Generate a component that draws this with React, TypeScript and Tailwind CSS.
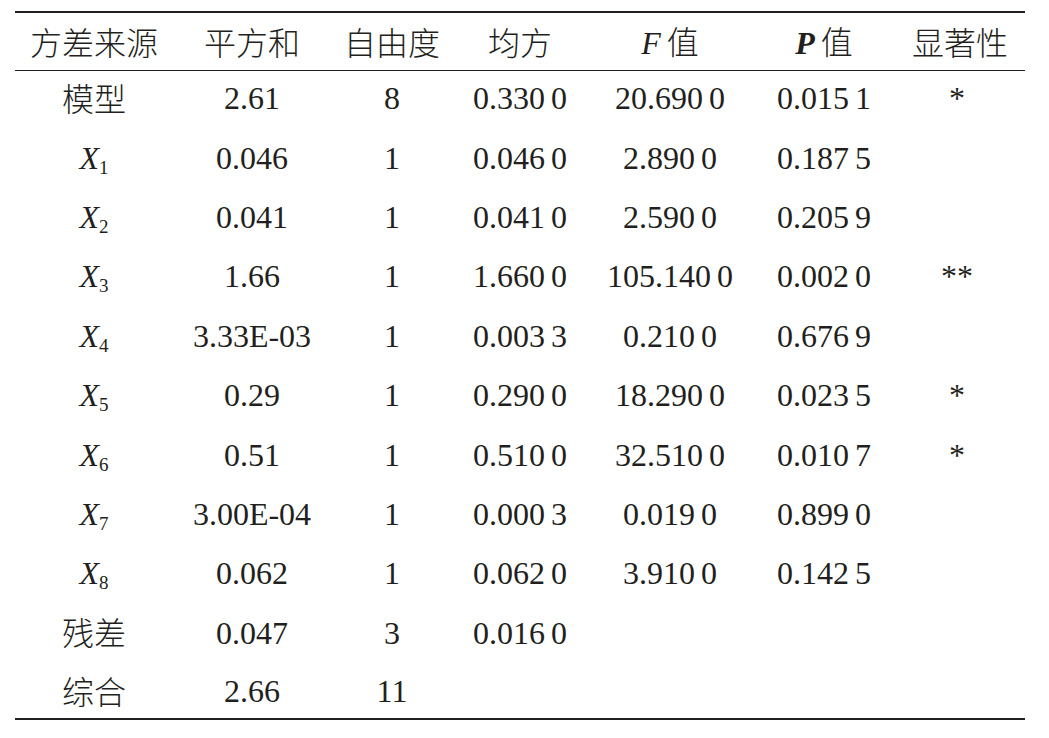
import React from "react";

type Row = { label: React.ReactNode; cells: string[] };

const X = ({ n }: { n: number }) => (
  <span className="inline-flex items-baseline font-['Liberation_Serif']">
    <span className="italic">X</span>
    <span className="text-[19px] relative top-[5px]">{n}</span>
  </span>
);

const Cjk = ({ children }: { children: React.ReactNode }) => (
  <span className="font-['Noto_Sans_CJK_SC'] font-light">{children}</span>
);

const rows: Row[] = [
  { label: <Cjk>模型</Cjk>, cells: ["2.61", "8", "0.330 0", "20.690 0", "0.015 1", "*"] },
  { label: <X n={1} />, cells: ["0.046", "1", "0.046 0", "2.890 0", "0.187 5", ""] },
  { label: <X n={2} />, cells: ["0.041", "1", "0.041 0", "2.590 0", "0.205 9", ""] },
  { label: <X n={3} />, cells: ["1.66", "1", "1.660 0", "105.140 0", "0.002 0", "**"] },
  { label: <X n={4} />, cells: ["3.33E-03", "1", "0.003 3", "0.210 0", "0.676 9", ""] },
  { label: <X n={5} />, cells: ["0.29", "1", "0.290 0", "18.290 0", "0.023 5", "*"] },
  { label: <X n={6} />, cells: ["0.51", "1", "0.510 0", "32.510 0", "0.010 7", "*"] },
  { label: <X n={7} />, cells: ["3.00E-04", "1", "0.000 3", "0.019 0", "0.899 0", ""] },
  { label: <X n={8} />, cells: ["0.062", "1", "0.062 0", "3.910 0", "0.142 5", ""] },
  { label: <Cjk>残差</Cjk>, cells: ["0.047", "3", "0.016 0", "", "", ""] },
  { label: <Cjk>综合</Cjk>, cells: ["2.66", "11", "", "", "", ""] },
];

const grid = "grid grid-cols-[158px_158px_122px_134px_166px_142px_130px]";

export default function App() {
  return (
    <div className="bg-white w-[1049px] h-[738px] pt-[11px] pl-[15px] text-[#231f20] font-['Liberation_Serif'] text-[32px] leading-none">
      <div className="w-[1010px] border-t-[2px] border-b-[2px] border-[#231f20]">
        <div className={`${grid} h-[57.5px] items-center border-b-[1.5px] border-[#231f20] text-center`}>
          <Cjk>方差来源</Cjk>
          <Cjk>平方和</Cjk>
          <Cjk>自由度</Cjk>
          <Cjk>均方</Cjk>
          <span>
            <span className="italic font-['Liberation_Serif']">F</span>
            <span className="ml-[6px]"><Cjk>值</Cjk></span>
          </span>
          <span>
            <span className="italic font-bold font-['Liberation_Serif']">P</span>
            <span className="ml-[6px]"><Cjk>值</Cjk></span>
          </span>
          <Cjk>显著性</Cjk>
        </div>
        {rows.map((r, i) => (
          <div key={i} className={`${grid} h-[59.4px] pb-[4px] last:h-[53.5px] last:pb-0 items-center text-center`}>
            <div>{r.label}</div>
            {r.cells.map((c, j) => (
              <div key={j} className={`font-['Liberation_Serif'] [word-spacing:-2px] ${j === 5 ? "pr-[6px]" : ""}`}>{c}</div>
            ))}
          </div>
        ))}
      </div>
    </div>
  );
}
